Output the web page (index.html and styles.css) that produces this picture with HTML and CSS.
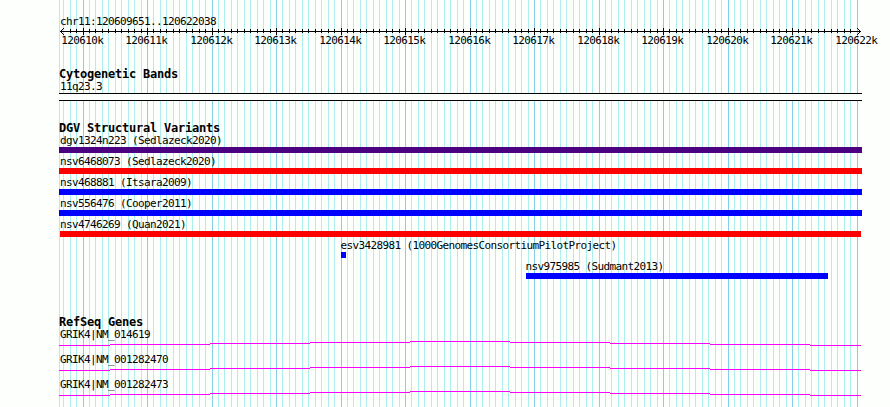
FILE: index.html
```html
<!DOCTYPE html>
<html lang="en">
<head>
<meta charset="utf-8">
<title>chr11:120609651..120622038</title>
<link rel="stylesheet" href="styles.css">
</head>
<body>
<main class="browser">
  <svg class="gridlines" id="grid" width="890" height="407"></svg>
  <header class="region">
    <p class="label">chr11:120609651..120622038</p>
    <svg class="ruler" id="ruler" width="890" height="19"></svg>
  </header>
  <section class="track cyto">
    <h2>Cytogenetic Bands</h2>
    <p class="label">11q23.3</p>
    <div class="band"></div>
  </section>
  <section class="track variants">
    <h2>DGV Structural Variants</h2>
    <div class="feature"><p class="label">dgv1324n223 (Sedlazeck2020)</p><div class="bar complex"></div></div>
    <div class="feature"><p class="label">nsv6468073 (Sedlazeck2020)</p><div class="bar loss"></div></div>
    <div class="feature"><p class="label">nsv468881 (Itsara2009)</p><div class="bar gain"></div></div>
    <div class="feature"><p class="label">nsv556476 (Cooper2011)</p><div class="bar gain"></div></div>
    <div class="feature"><p class="label">nsv4746269 (Quan2021)</p><div class="bar loss inset"></div></div>
    <div class="feature esv"><p class="label">esv3428981 (1000GenomesConsortiumPilotProject)</p><div class="bar gain"></div></div>
    <div class="feature sudmant"><p class="label">nsv975985 (Sudmant2013)</p><div class="bar gain"></div></div>
  </section>
  <section class="track genes">
    <h2>RefSeq Genes</h2>
    <div class="gene"><p class="label">GRIK4|NM_014619</p><svg class="intron" width="802" height="5"></svg></div>
    <div class="gene"><p class="label">GRIK4|NM_001282470</p><svg class="intron" width="802" height="5"></svg></div>
    <div class="gene"><p class="label">GRIK4|NM_001282473</p><svg class="intron" width="802" height="5"></svg></div>
  </section>
</main>
<script src="tracks.js"></script>
</body>
</html>
```
FILE: styles.css
```css
* { box-sizing: border-box; margin: 0; padding: 0; }
body {
  width: 890px;
  height: 407px;
  overflow: hidden;
  background: #fdfffc;
  color: #000;
  font-family: "DejaVu Sans Mono", monospace;
}
.browser { position: relative; height: 407px; padding-top: 15px; overflow: hidden; }
.gridlines { position: absolute; inset: 0; z-index: -1; }
svg { display: block; shape-rendering: crispEdges; }
.label, .ruler text {
  font-size: 11px;
  line-height: 13px;
  letter-spacing: -0.622px;
  white-space: pre;
}
.label { height: 13px; padding-left: 1px; }
h2 {
  height: 12px;
  font-size: 12px;
  line-height: 13px;
  font-weight: bold;
  letter-spacing: -0.225px;
  white-space: pre;
}
.region > .label { margin-left: 59px; }
.track { margin-left: 59px; width: 803px; }
.cyto { margin-top: 21px; }
.band { height: 8px; border: solid #000; border-width: 1px 0; background: #fdfffc; }
.variants { margin-top: 21px; }
.feature { height: 21px; }
.bar { height: 6px; }
.complex { background: #4b0082; }
.loss { background: #f00; }
.gain { background: #00f; }
.inset { margin: 0 1px; }
.esv { margin-left: 281px; }
.esv .bar { margin-left: 1px; width: 5px; }
.sudmant { margin-left: 466px; }
.sudmant .bar { margin-left: 1px; width: 302px; }
.esv .label, .sudmant .label { padding-left: 0.4px; }
.genes { margin-top: 35px; }
.gene { height: 25px; }
.minor { fill: #afeeee; }
.major { fill: #87ceeb; }
.intron rect { fill: #f0f; }
```
FILE: tracks.js
```js
const NS = "http://www.w3.org/2000/svg";

function rect(svg, x, y, width, height, cls) {
  const el = document.createElementNS(NS, "rect");
  Object.entries({ x, y, width, height }).forEach(([k, v]) => el.setAttribute(k, v));
  if (cls) el.setAttribute("class", cls);
  svg.appendChild(el);
}

const grid = document.getElementById("grid");
const ruler = document.getElementById("ruler");

// One division per 100 bp, a labelled one per 1 kb.
rect(grid, 59, 0, 1, 407, "minor");
rect(ruler, 60, 3, 801, 1);
for (let i = -3; i <= 120; i++) {
  const x = Math.floor(83 + i * 6.45 + 1e-6);
  const major = i % 10 === 0;
  rect(grid, x, 0, 1, 407, major ? "major" : "minor");
  // The arrowheads take the place of the outermost ticks.
  if (i > -3 && i < 120) rect(ruler, x, major ? 0 : 1, 1, major ? 7 : 4);
  if (major) {
    const text = document.createElementNS(NS, "text");
    text.setAttribute("x", x - 21.7);
    text.setAttribute("y", 16);
    text.textContent = 120610 + i / 10 + "k";
    ruler.appendChild(text);
  }
}
for (let d = 1; d <= 3; d++) {
  for (const s of [-1, 1]) {
    rect(ruler, 60 + d, 3 + s * d, 1, 1);
    rect(ruler, 860 - d, 3 + s * d, 1, 1);
  }
}

// Introns rise to the middle of the visible span and fall again.
const steps = [[0, 51, 4], [51, 100, 3], [151, 100, 2], [251, 100, 1], [351, 100, 0],
  [451, 100, 1], [551, 100, 2], [651, 100, 3], [751, 51, 4]];
document.querySelectorAll(".intron").forEach(svg =>
  steps.forEach(([x, w, y]) => rect(svg, x, y, w, 1)));
```
